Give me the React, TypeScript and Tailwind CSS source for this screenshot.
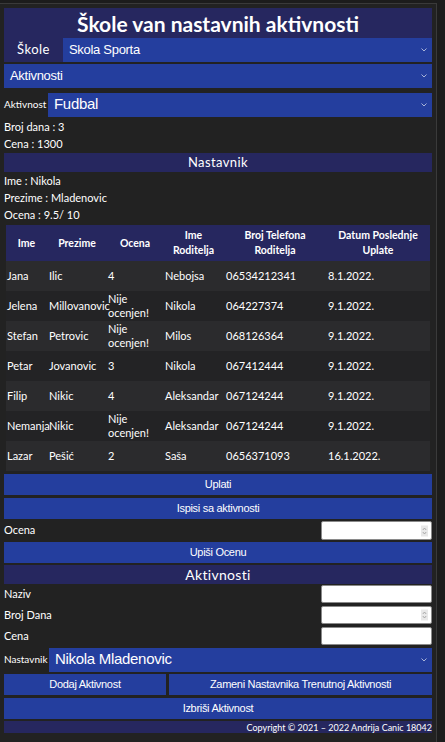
import React from 'react';

const students = [
  { ime: 'Jana', prezime: 'Ilic', ocena: '4', roditelj: 'Nebojsa', tel: '06534212341', datum: '8.1.2022.' },
  { ime: 'Jelena', prezime: 'Millovanovic', ocena: 'Nije ocenjen!', roditelj: 'Nikola', tel: '064227374', datum: '9.1.2022.' },
  { ime: 'Stefan', prezime: 'Petrovic', ocena: 'Nije ocenjen!', roditelj: 'Milos', tel: '068126364', datum: '9.1.2022.' },
  { ime: 'Petar', prezime: 'Jovanovic', ocena: '3', roditelj: 'Nikola', tel: '067412444', datum: '9.1.2022.' },
  { ime: 'Filip', prezime: 'Nikic', ocena: '4', roditelj: 'Aleksandar', tel: '067124244', datum: '9.1.2022.' },
  { ime: 'Nemanja', prezime: 'Nikic', ocena: 'Nije ocenjen!', roditelj: 'Aleksandar', tel: '067124244', datum: '9.1.2022.' },
  { ime: 'Lazar', prezime: 'Pešić', ocena: '2', roditelj: 'Saša', tel: '0656371093', datum: '16.1.2022.' },
];

const narrow = { fontFamily: '"Liberation Sans Narrow", "Liberation Sans", sans-serif' };

export default function App() {
  return (
    <div className="min-h-screen bg-[#1c1c1c] pt-[3px] text-white" style={{ fontFamily: 'Lato, "Open Sans", sans-serif' }}>
      <div className="w-[437px] min-h-[739px] border-t border-r border-[#3a3a3a] bg-[#222222] px-[4px] pt-[4px]">
        {/* Title */}
        <div className="h-[30px] bg-[#26275f] flex items-center justify-center">
          <h1 className="text-[21px] font-bold leading-none">Škole van nastavnih aktivnosti</h1>
        </div>

        {/* Škole */}
        <div className="flex h-[24px]">
          <div className="w-[59px] bg-[#26275f] flex items-center justify-center text-[13px] tracking-[0.5px]">Škole</div>
          <Select value="Skola Sporta" className="flex-1 text-[13px]" />
        </div>

        <Select value="Aktivnosti" className="mt-[2px] h-[23px] text-[13px]" />

        <div className="mt-[5px] flex items-center h-[23px]">
          <span className="w-[44px] text-[10px]">Aktivnost</span>
          <Select value="Fudbal" className="flex-1 h-[23px] text-[15px]" />
        </div>

        <div className="mt-[2px] text-[11px] leading-[17px]">
          <div>Broj dana : 3</div>
          <div>Cena : 1300</div>
        </div>

        <SectionHeader title="Nastavnik" />

        <div className="text-[11px] leading-[17px]">
          <div>Ime : Nikola</div>
          <div>Prezime : Mladenovic</div>
          <div>Ocena : 9.5/ 10</div>
        </div>

        {/* Table */}
        <table className="mx-[2px] mt-[2px] w-[424px] table-fixed border-collapse text-[11px]">
          <colgroup>
            <col className="w-[41px]" />
            <col className="w-[60px]" />
            <col className="w-[56px]" />
            <col className="w-[61px]" />
            <col className="w-[102px]" />
            <col className="w-[104px]" />
          </colgroup>
          <thead className="bg-[#26275f]">
            <tr className="h-[36px] text-[10.5px] font-bold leading-[15px]">
              <th>Ime</th>
              <th>Prezime</th>
              <th>Ocena</th>
              <th>Ime<br />Roditelja</th>
              <th>Broj Telefona<br />Roditelja</th>
              <th>Datum Poslednje<br />Uplate</th>
            </tr>
          </thead>
          <tbody>
            {students.map((s, i) => (
              <tr key={i} className={`h-[30px] leading-[14px] ${i % 2 === 0 ? 'bg-[#2b2b2d]' : 'bg-[#232325]'}`}>
                <td className="pl-[1px]">{s.ime}</td>
                <td className="pl-[2px]">{s.prezime}</td>
                <td className="pl-[1px]">{s.ocena}</td>
                <td className="pl-[2px]">{s.roditelj}</td>
                <td className="pl-[2px]">{s.tel}</td>
                <td className="pl-[2px]">{s.datum}</td>
              </tr>
            ))}
          </tbody>
        </table>

        <Button label="Uplati" className="mt-[3px] w-full" />
        <Button label="Ispisi sa aktivnosti" className="mt-[3px] w-full" />

        <InputRow label="Ocena" spinner className="mt-[2px]" />

        <Button label="Upiši Ocenu" className="mt-[2px] w-full" />

        <div className="mt-[2px] h-[19px] bg-[#26275f] flex items-center justify-center text-[14px] tracking-[0.3px]">Aktivnosti</div>

        <InputRow label="Naziv" className="mt-[1px]" h="h-[18px]" />
        <InputRow label="Broj Dana" spinner className="mt-[3px]" h="h-[18px]" />
        <InputRow label="Cena" className="mt-[3px]" h="h-[18px]" />

        <div className="mt-[3px] flex items-center h-[23px]">
          <span className="w-[45px] text-[10px]">Nastavnik</span>
          <Select value="Nikola Mladenovic" className="flex-1 h-[23px] text-[15px]" />
        </div>

        <div className="mt-[3px] flex gap-[3px]">
          <Button label="Dodaj Aktivnost" className="w-[162px] h-[20px]" />
          <Button label="Zameni Nastavnika Trenutnoj Aktivnosti" className="flex-1 h-[20px]" />
        </div>

        <Button label="Izbriši Aktivnost" className="mt-[3px] w-full" />

        <footer className="mt-[2px] h-[12px] bg-[#26275f] flex items-center justify-end text-[9px] leading-none">
          Copyright © 2021 – 2022 Andrija Canic 18042
        </footer>
      </div>
    </div>
  );
}

function SectionHeader({ title }: { title: string }) {
  return (
    <div className="mt-[1px] h-[19px] bg-[#26275f] flex items-center justify-center text-[13px] tracking-[0.4px]">{title}</div>
  );
}

function Select({ value, className }: { value: string; className?: string }) {
  return (
    <div className={`relative h-[24px] bg-[#243e9e] flex items-center pl-[6px] tracking-[-0.3px] ${className ?? ''}`} style={narrow}>
      <span>{value}</span>
      <svg className="absolute right-[5px] top-1/2 -translate-y-1/2" width="6" height="4" viewBox="0 0 6 4">
        <path d="M0.5 0.5 L3 3 L5.5 0.5" stroke="#a9b4d8" strokeWidth="1" fill="none" />
      </svg>
    </div>
  );
}

function Button({ label, className }: { label: string; className?: string }) {
  return (
    <button className={`block h-[21px] bg-[#243e9e] text-[11px] tracking-[-0.3px] text-white whitespace-nowrap ${className ?? ''}`} style={narrow}>
      {label}
    </button>
  );
}

function InputRow({ label, spinner, className, h }: { label: string; spinner?: boolean; className?: string; h?: string }) {
  return (
    <div className={`flex items-center justify-between ${className ?? ''}`}>
      <span className="text-[11px]">{label}</span>
      <div className={`relative w-[111px] ${h ?? 'h-[19px]'} bg-white rounded-[2px] border border-[#8a8a8a]`}>
        {spinner && (
          <div className="absolute right-[3px] top-1/2 -translate-y-1/2 w-[7px] h-[11px] bg-[#e8e8e8] flex items-center justify-center">
            <svg width="5" height="9" viewBox="0 0 5 9">
              <path d="M0.8 3.5 L2.5 1.5 L4.2 3.5 M0.8 5.5 L2.5 7.5 L4.2 5.5" stroke="#9a9a9a" strokeWidth="0.8" fill="none" />
            </svg>
          </div>
        )}
      </div>
    </div>
  );
}
